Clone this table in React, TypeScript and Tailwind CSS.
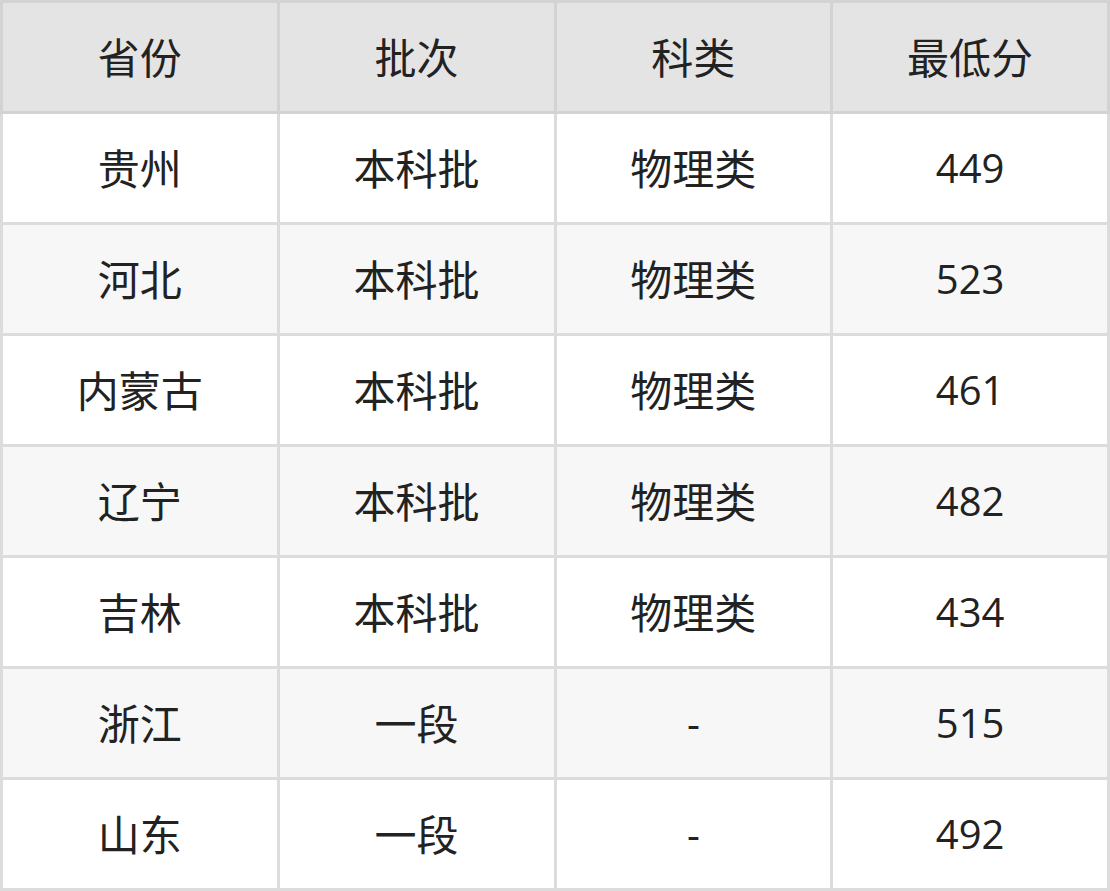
const rows = [
  ["贵州", "本科批", "物理类", "449"],
  ["河北", "本科批", "物理类", "523"],
  ["内蒙古", "本科批", "物理类", "461"],
  ["辽宁", "本科批", "物理类", "482"],
  ["吉林", "本科批", "物理类", "434"],
  ["浙江", "一段", "-", "515"],
  ["山东", "一段", "-", "492"],
];

const headers = ["省份", "批次", "科类", "最低分"];

// digits and dashes render a touch smaller than the CJK text
const isLatin = (s: string) => /^[0-9-]+$/.test(s);

export default function App() {
  return (
    <div className="w-[1110px] h-[891px] bg-white">
      <table
        className="w-full table-fixed border-collapse text-[#222]"
        style={{ fontFamily: '"Open Sans", "Noto Sans CJK SC", sans-serif' }}
      >
        <thead>
          <tr className="bg-[#e4e4e4]">
            {headers.map((h) => (
              <th
                key={h}
                className="h-[111px] border-[3px] border-[#d3d3d3] font-normal text-[42px] text-center align-middle"
              >
                {h}
              </th>
            ))}
          </tr>
        </thead>
        <tbody>
          {rows.map((r, i) => (
            <tr key={i} className={i % 2 === 1 ? "bg-[#f7f7f7]" : "bg-white"}>
              {r.map((c, j) => (
                <td
                  key={j}
                  className={`h-[111px] border-[3px] border-[#dcdcdc] text-center align-middle ${
                    isLatin(c) ? "text-[40px]" : "text-[42px]"
                  }`}
                >
                  {c}
                </td>
              ))}
            </tr>
          ))}
        </tbody>
      </table>
    </div>
  );
}
